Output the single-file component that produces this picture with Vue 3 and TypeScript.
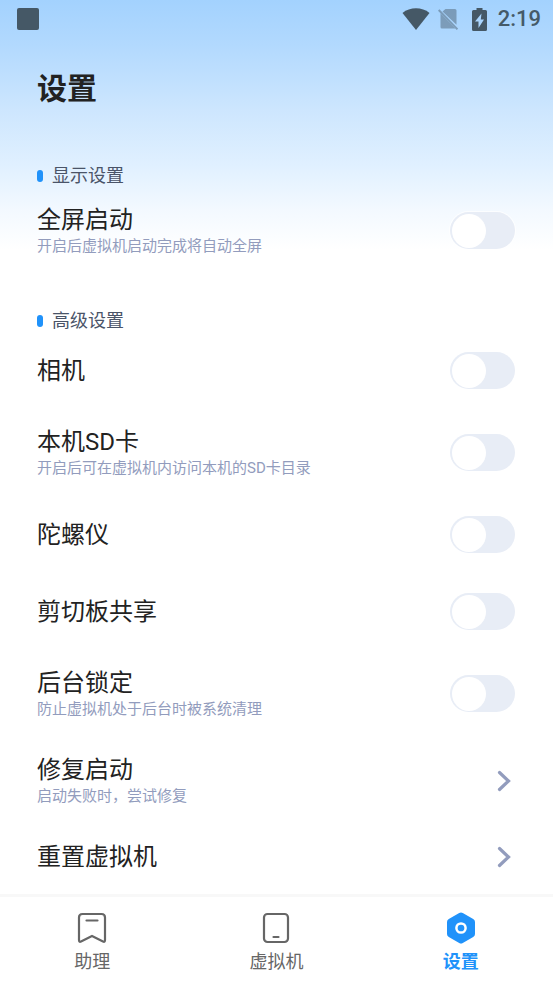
<script setup lang="ts">
import { ref } from 'vue'

interface SettingRow {
  id: string
  title: string
  note?: string
  kind: 'switch' | 'action'
}

interface SettingGroup {
  name: string
  rows: SettingRow[]
}

const groups: SettingGroup[] = [
  {
    name: '显示设置',
    rows: [
      { id: 'fullscreen', title: '全屏启动', note: '开启后虚拟机启动完成将自动全屏', kind: 'switch' },
    ],
  },
  {
    name: '高级设置',
    rows: [
      { id: 'camera', title: '相机', kind: 'switch' },
      { id: 'sdcard', title: '本机SD卡', note: '开启后可在虚拟机内访问本机的SD卡目录', kind: 'switch' },
      { id: 'gyro', title: '陀螺仪', kind: 'switch' },
      { id: 'clipboard', title: '剪切板共享', kind: 'switch' },
      { id: 'lock', title: '后台锁定', note: '防止虚拟机处于后台时被系统清理', kind: 'switch' },
      { id: 'repair', title: '修复启动', note: '启动失败时，尝试修复', kind: 'action' },
      { id: 'reset', title: '重置虚拟机', kind: 'action' },
    ],
  },
]

const enabled = ref<Record<string, boolean>>({})
</script>

<template>
  <div class="screen">
    <header class="status">
      <svg class="app-mark" viewBox="0 0 22 22"><rect width="22" height="22" rx="2" /></svg>
      <div class="status-icons">
        <svg class="wifi" viewBox="0 0 28 22"><path d="M14 22 0.500 5C8-1.200 20-1.200 27.500 5Z" /></svg>
        <svg class="sim" viewBox="0 0 20 22">
          <path d="M7.500 1H17Q18.500 1 18.500 2.500V16.800L4.500 3.600ZM2.500 5.200 17.500 20.500H4Q2.500 20.500 2.500 19Z" />
          <path class="slash" d="M0.700 2 19.500 21.300" />
        </svg>
        <svg class="battery" viewBox="0 0 15 23">
          <path fill-rule="evenodd" d="M4.500 0H10.500V2H13.500Q15 2 15 3.500V21.500Q15 23 13.500 23H1.500Q0 23 0 21.500V3.500Q0 2 1.500 2H4.500ZM9.500 5.500 3 13.500H6.500V20L12 11.500H8.800Z" />
        </svg>
        <time class="clock">2:19</time>
      </div>
    </header>

    <main class="content">
      <h1>设置</h1>
      <section v-for="group in groups" :key="group.name" class="group">
        <h2>{{ group.name }}</h2>
        <template v-for="row in group.rows" :key="row.id">
          <label v-if="row.kind === 'switch'" class="row" :class="{ tall: row.note }">
            <span class="texts">
              <span class="title">{{ row.title }}</span>
              <span v-if="row.note" class="note">{{ row.note }}</span>
            </span>
            <input v-model="enabled[row.id]" class="switch" type="checkbox" role="switch" />
          </label>
          <button v-else type="button" class="row action" :class="{ tall: row.note }">
            <span class="texts">
              <span class="title">{{ row.title }}</span>
              <span v-if="row.note" class="note">{{ row.note }}</span>
            </span>
            <svg class="chevron" viewBox="0 0 14 22"><path d="M2.500 2.500 11.500 11 2.500 19.500" /></svg>
          </button>
        </template>
      </section>
    </main>

    <nav class="tabs">
      <a class="tab" href="#assistant">
        <svg class="tab-icon" viewBox="0 0 32 32">
          <path d="M3 28V5.500Q3 2 6.500 2H25.500Q29 2 29 5.500V28Q29 30.500 27 29.500L16 24 5 29.500Q3 30.500 3 28ZM10.500 8.500H21.500" />
        </svg>
        <span>助理</span>
      </a>
      <a class="tab" href="#vm">
        <svg class="tab-icon" viewBox="0 0 32 32">
          <rect x="4" y="2" width="24" height="28" rx="3.500" />
          <path d="M13.500 25H18.500" />
        </svg>
        <span>虚拟机</span>
      </a>
      <a class="tab active" href="#settings" aria-current="page">
        <svg class="tab-icon" viewBox="0 0 32 32">
          <path class="hex" d="M14.200 1Q16 0 17.800 1L28.200 7Q30 8 30 10V22Q30 24 28.200 25L17.800 31Q16 32 14.200 31L3.800 25Q2 24 2 22V10Q2 8 3.800 7Z" />
          <circle class="hole" cx="16" cy="16" r="4.600" />
        </svg>
        <span>设置</span>
      </a>
    </nav>
  </div>
</template>

<style>
body {
  background: #fff;
}
</style>

<style scoped>
.screen {
  box-sizing: border-box;
  display: flex;
  flex-direction: column;
  min-height: 100vh;
  font-family: Roboto, "Noto Sans CJK SC", sans-serif;
  color: #222;
  background: linear-gradient(#a3d2fe 0, #b2d9fe 45px, #cde6fe 110px, #e0f0ff 165px, #f3f9ff 210px, #fff 250px) no-repeat;
}

.status {
  display: flex;
  align-items: center;
  justify-content: space-between;
  height: 38px;
  padding: 0 12px 0 17px;
  color: #455a68;
}

.status svg {
  display: block;
  fill: #455866;
}

.app-mark {
  width: 22px;
  height: 22px;
}

.status-icons {
  display: flex;
  align-items: center;
}

.wifi {
  width: 28px;
  height: 22px;
  margin-right: 8px;
}

.sim {
  width: 20px;
  height: 22px;
  margin-right: 14px;
  opacity: 0.45;
}

.slash {
  fill: none;
  stroke: #455866;
  stroke-width: 2;
}

.battery {
  width: 15px;
  height: 23px;
  margin-right: 11px;
}

.clock {
  font-size: 22px;
  font-weight: 500;
  line-height: 40px;
}

.content {
  padding: 0 38px 0 37px;
}

h1 {
  margin: 31px 0 55px;
  font-size: 30px;
  font-weight: 700;
  line-height: 40px;
}

.group + .group {
  margin-top: 35px;
}

h2 {
  display: flex;
  align-items: center;
  gap: 9px;
  margin: 0;
  font-size: 18px;
  font-weight: 400;
  line-height: 24px;
  color: #4a5468;
}

h2::before {
  content: "";
  width: 6px;
  height: 12px;
  border-radius: 3px;
  background: #2092fa;
}

.row {
  display: flex;
  align-items: center;
  justify-content: space-between;
  width: 100%;
  height: 77px;
}

.action {
  height: 66px;
  padding: 0;
  border: 0;
  background: none;
  font: inherit;
  color: inherit;
  text-align: left;
}

.row.tall {
  height: 87px;
}

h2 + .row {
  margin-top: -1px;
}

.texts {
  display: flex;
  flex-direction: column;
}

.tall .texts {
  padding-bottom: 2px;
}

.title {
  font-size: 24px;
  line-height: 32px;
}

.note {
  font-size: 15px;
  line-height: 20px;
  color: #929cbd;
}

.switch {
  appearance: none;
  flex: none;
  display: flex;
  align-items: center;
  box-sizing: border-box;
  width: 65px;
  height: 37px;
  margin: 0;
  padding: 0 2px;
  border-radius: 19px;
  background: #e8edf6;
  box-shadow: 0 0 0 1px #ffffffb0;
}

.switch::before {
  content: "";
  width: 34px;
  height: 34px;
  border-radius: 50%;
  background: #fff;
}

.switch:checked {
  justify-content: flex-end;
  background: #2092fa;
}

.chevron {
  flex: none;
  width: 14px;
  height: 22px;
  margin-right: 4px;
  fill: none;
  stroke: #929cbd;
  stroke-width: 3.200;
  stroke-linecap: round;
}

.tabs {
  display: flex;
  box-sizing: border-box;
  height: 89px;
  margin-top: auto;
  border-top: 3px solid #f8f8f8;
  background: #fff;
}

.tab {
  flex: 1;
  display: flex;
  flex-direction: column;
  align-items: center;
  gap: 5px;
  padding-top: 15px;
  font-size: 18px;
  line-height: 26px;
  color: #666;
  text-decoration: none;
}

.tab-icon {
  width: 32px;
  height: 32px;
  fill: none;
  stroke: #666;
  stroke-width: 2.200;
  stroke-linecap: round;
}

.active {
  font-weight: 700;
  color: #2092fa;
}

.tab-icon .hex {
  fill: #2092fa;
  stroke: none;
}

.tab-icon .hole {
  stroke: #fff;
  stroke-width: 2.500;
}
</style>
